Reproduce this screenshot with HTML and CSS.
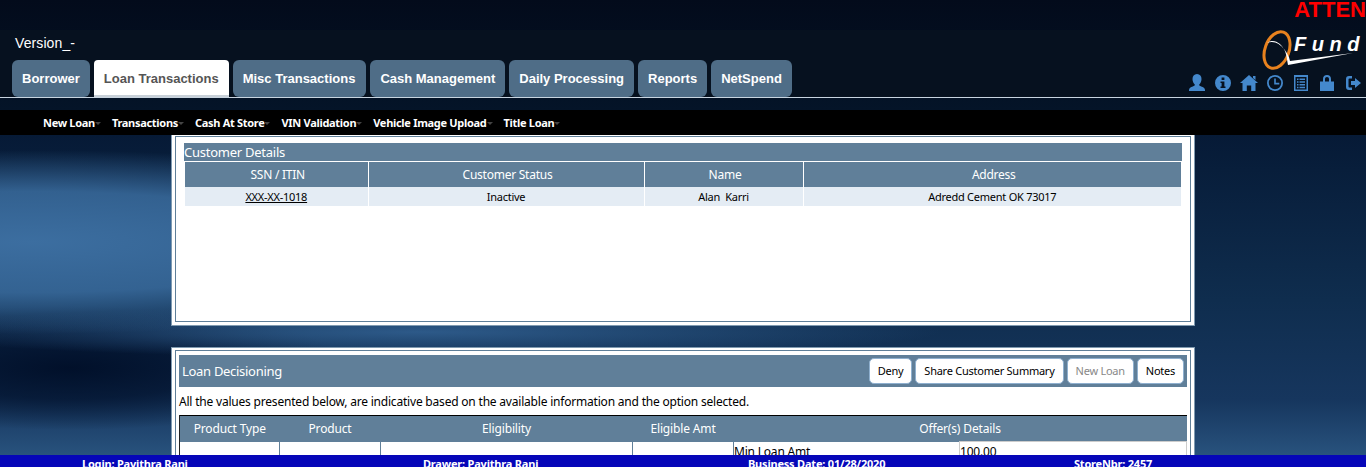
FILE: index.html
```html
<!DOCTYPE html>
<html lang="en">
<head>
    <meta charset="UTF-8">
    <title>QFund</title>
    <link rel="stylesheet" href="styles.css">
</head>
<body>
    <div class="alert">ATTEN</div>
    <header class="header">
        <div class="header-left">
            <div class="version">Version_-</div>
            <nav class="tabs">
                <a class="tab">Borrower</a>
                <a class="tab active">Loan Transactions</a>
                <a class="tab tab-misc">Misc Transactions</a>
                <a class="tab">Cash Management</a>
                <a class="tab">Daily Processing</a>
                <a class="tab">Reports</a>
                <a class="tab">NetSpend</a>
            </nav>
        </div>
        <div class="header-right">
            <div class="logo">
                <svg width="105" height="40" viewBox="0 0 105 40">
                    <ellipse cx="16" cy="20" rx="12" ry="19" transform="rotate(20 16 20)" fill="none" stroke="#e8821e" stroke-width="3"/>
                    <path d="M6 13 C13 8 20 13 24 21 C26 26 26 31 27 35 L92 23 L29 31 C28 26 26 23 23 19 C19 14 13 10 6 13z" fill="#fff"/>
                </svg>
                <span class="logo-text">Fund</span>
            </div>
            <div class="icons">
                <svg width="18" height="18" viewBox="0 0 18 18"><path d="M9 0c3 0 4.500 2.200 4.500 5 0 2.500-1 4.500-2.300 5.500 0 1 .5 1.500 2 2 2 .7 3.800 1.500 3.800 3.500v1H1v-1c0-2 1.800-2.800 3.800-3.500 1.500-.5 2-1 2-2C5.500 9.500 4.500 7.500 4.500 5 4.500 2.200 6 0 9 0z"/></svg>
                <svg width="18" height="18" viewBox="0 0 18 18"><path fill-rule="evenodd" d="M9 1a8 8 0 1 1 0 16A8 8 0 0 1 9 1zM7.600 3.500v2.500h2.800V3.500zM6.500 7.500v1.600h1.100v3.400H6.500v1.600h5v-1.600h-1.100v-5z"/></svg>
                <svg width="18" height="18" viewBox="0 0 18 18"><path d="M9 1l9 8h-2.500v8h-4.300v-5.500H6.800V17H2.500V9H0zM13 2h2.500v4L13 4z"/></svg>
                <svg width="18" height="18" viewBox="0 0 18 18"><path fill-rule="evenodd" d="M9 1a8 8 0 1 1 0 16A8 8 0 0 1 9 1zM9 2.800a6.200 6.200 0 1 0 0 12.400A6.200 6.200 0 0 0 9 2.800zM8.200 4.500h1.600v4.300h3.500v1.600H8.200z"/></svg>
                <svg width="18" height="18" viewBox="0 0 18 18"><path fill-rule="evenodd" d="M2 1h14v16H2zM3.500 3v12.500h11V3zM5 4.500h1.500V6H5zM7.500 4.500H13V6H7.500zM5 7.300h1.500v1.500H5zM7.500 7.300H13v1.500H7.500zM5 10h1.500v1.500H5zM7.500 10H13v1.500H7.500zM5 12.700h1.500v1.500H5zM7.500 12.700H13v1.500H7.500z"/></svg>
                <svg width="18" height="18" viewBox="0 0 18 18"><path fill-rule="evenodd" d="M9 1c2.500 0 4 1.600 4 4v2.500h3V17H2V7.500h3V5c0-2.400 1.500-4 4-4zM7 5v2.500h4V5c0-1.200-.8-2-2-2s-2 .8-2 2z"/></svg>
                <svg width="18" height="18" viewBox="0 0 18 18"><path d="M8 2H5a3 3 0 0 0-3 3v8a3 3 0 0 0 3 3h3v-2.500H5.500a1 1 0 0 1-1-1v-7a1 1 0 0 1 1-1H8zM11 4v3H7v4h4v3l6-5z"/></svg>
            </div>
        </div>
    </header>
    <div class="submenu">
        <a class="sub-item">New Loan</a>
        <a class="sub-item">Transactions</a>
        <a class="sub-item">Cash At Store</a>
        <a class="sub-item">VIN Validation</a>
        <a class="sub-item">Vehicle Image Upload</a>
        <a class="sub-item">Title Loan</a>
    </div>

    <main class="content">
        <section class="panel panel-customer">
            <div class="panel-inner">
                <div class="caption">Customer Details</div>
                <table class="grid">
                    <colgroup>
                        <col class="c-ssn"><col class="c-status"><col class="c-name"><col>
                    </colgroup>
                    <tr><th>SSN / ITIN</th><th>Customer Status</th><th>Name</th><th>Address</th></tr>
                    <tr><td><u>XXX-XX-1018</u></td><td>Inactive</td><td>Alan &nbsp;Karri</td><td>Adredd Cement OK 73017</td></tr>
                </table>
            </div>
        </section>

        <section class="panel panel-loan">
            <div class="panel-inner">
                <div class="loan-bar">
                    <span class="loan-title">Loan Decisioning</span>
                    <div class="actions">
                        <button class="btn">Deny</button>
                        <button class="btn">Share Customer Summary</button>
                        <button class="btn" disabled>New Loan</button>
                        <button class="btn">Notes</button>
                    </div>
                </div>
                <p class="note">All the values presented below, are indicative based on the available information and the option selected.</p>
                <table class="offers">
                    <colgroup>
                        <col class="o-type"><col class="o-product"><col class="o-elig"><col class="o-amt"><col class="o-label"><col>
                    </colgroup>
                    <tr><th>Product Type</th><th>Product</th><th>Eligibility</th><th>Eligible Amt</th><th colspan="2">Offer(s) Details</th></tr>
                    <tr><td></td><td></td><td></td><td></td><td>Min Loan Amt</td><td class="boxed">100.00</td></tr>
                </table>
            </div>
        </section>
    </main>

    <footer class="footer">
        <span class="f-login">Login: Pavithra Rani</span>
        <span class="f-drawer">Drawer: Pavithra Rani</span>
        <span class="f-date">Business Date: 01/28/2020</span>
        <span>StoreNbr: 2457</span>
    </footer>
</body>
</html>
```

FILE: styles.css
```css
html, body {
    margin: 0;
    height: 467px;
    overflow: hidden;
}
body {
    position: relative;
    font-family: "Noto Sans", Tahoma, sans-serif;
    font-size: 11px;
    letter-spacing: -0.25px;
    color: #000;
    background-color: #0f2a4c;
    background-image:
        radial-gradient(ellipse 540px 92px at 30px 242px, rgba(60,110,160,1) 0, rgba(58,108,158,0.85) 55%, rgba(58,108,158,0) 100%),
        radial-gradient(ellipse 520px 26px at 420px 332px, rgba(52,100,150,0.8), rgba(52,100,150,0) 100%),
        radial-gradient(ellipse 280px 62px at 70px 368px, #01102a 0, rgba(1,16,42,0.7) 50%, rgba(1,16,42,0) 100%),
        linear-gradient(to bottom, #030b1b 0, #041428 110px, #061a36 135px, #0f2d4e 300px, #16365e 400px, #2a5580 460px);
}
.alert {
    height: 30px;
    text-align: right;
    color: #f00;
    font: bold 22px/20px "Liberation Sans", Arial, sans-serif;
    letter-spacing: 0;
    white-space: nowrap;
}
.header {
    height: 67px;
    background: #06111f;
    border-bottom: 1px solid #c8d4e0;
    display: flex;
    justify-content: space-between;
    letter-spacing: 0;
}
.header-left, .header-right {
    display: flex;
    flex-direction: column;
    justify-content: space-between;
}
.version {
    padding: 5px 0 0 15px;
    color: #fff;
    font: 14px/16px "Liberation Sans", Arial, sans-serif;
    letter-spacing: 0.1px;
}
.tabs {
    display: flex;
    gap: 4px;
    padding-left: 12px;
}
.tab {
    height: 37px;
    padding: 0 10px;
    display: flex;
    align-items: center;
    box-sizing: border-box;
    border-radius: 6px;
    background: #4f6d87;
    color: #fff;
    font: bold 13px "Liberation Sans", Arial, sans-serif;
}
.tab-misc {
    padding-right: 11px;
}
.tab.active {
    background: #fff;
    color: #555;
    border-radius: 4px 4px 0 0;
    padding-top: 2px;
    border-bottom: 2px solid #c8d0d8;
}
.logo {
    position: relative;
    align-self: flex-end;
    width: 105px;
    height: 40px;
}
.logo-text {
    position: absolute;
    left: 33px;
    top: 3px;
    color: #fff;
    font: italic bold 20px/23px "Liberation Sans", Arial, sans-serif;
    letter-spacing: 5.5px;
}
.icons {
    display: flex;
    gap: 8px;
    justify-content: flex-end;
    padding: 0 4px 5px 0;
}
.icons svg {
    fill: #4488cc;
}
.submenu {
    margin-top: 12px;
    height: 25px;
    background: #000;
    display: flex;
    align-items: center;
    gap: 17px;
    padding-left: 43px;
    font-weight: bold;
    letter-spacing: -0.3px;
    color: #fff;
}
.sub-item {
    position: relative;
}
.sub-item::after {
    content: "";
    position: absolute;
    right: -6px;
    top: 7px;
    border: 3px solid transparent;
    border-top: 3px solid #444;
}
.content {
    height: 320px;
    overflow: hidden;
    width: 1024px;
    margin-left: 171px;
    display: flex;
    flex-direction: column;
    gap: 21px;
}
.panel {
    flex: none;
    background: #fff;
    border: 1px solid #7f9ab0;
    padding: 2px 3px 3px;
    box-sizing: border-box;
}
.panel-inner {
    border: 1px solid #5f7f99;
    height: 100%;
    box-sizing: border-box;
}
.panel-customer {
    height: 191px;
    border-top: 0;
    padding-top: 1px;
}
.panel-customer .panel-inner {
    padding: 6px 8px;
}
.caption {
    background: #607f99;
    color: #fff;
    font-size: 13px;
    line-height: 18px;
    height: 18px;
}
.grid {
    width: 996px;
    border-collapse: collapse;
    table-layout: fixed;
    margin-left: 1px;
}
.grid th {
    height: 25px;
    padding: 0 0 0 3px;
    background: #607f99;
    color: #fff;
    font-size: 12px;
    font-weight: normal;
    border-top: 1px solid #fff;
    border-right: 1px solid #fff;
}
.grid td {
    height: 19px;
    padding: 0;
    background: #e4ecf4;
    text-align: center;
    border-right: 1px solid #fff;
}
.c-ssn { width: 183px; }
.c-status { width: 276px; }
.c-name { width: 159px; }
.panel-loan {
    height: 200px;
}
.panel-loan .panel-inner {
    padding: 4px 3px 0 3px;
}
.loan-bar {
    background: #607f99;
    height: 32px;
    display: flex;
    justify-content: space-between;
    align-items: center;
    padding: 0 3px;
}
.loan-title {
    color: #fff;
    font-size: 13px;
    letter-spacing: -0.3px;
}
.actions {
    display: flex;
    gap: 3px;
}
.btn {
    height: 26px;
    min-width: 43px;
    padding: 0 8px 2px;
    background: #fff;
    border: 1px solid #8fb0cf;
    border-radius: 5px;
    font: 11px "Noto Sans", Tahoma, sans-serif;
    letter-spacing: -0.25px;
    color: #000;
}
.btn:disabled {
    color: #888;
}
.note {
    margin: 0;
    height: 28px;
    line-height: 30px;
    font-size: 12px;
    letter-spacing: -0.2px;
}
.offers {
    width: 100%;
    border-collapse: collapse;
    table-layout: fixed;
    border-top: 1px solid #000;
}
.offers th {
    height: 25px;
    padding: 0;
    background: #607f99;
    color: #fff;
    font-size: 12px;
    font-weight: normal;
    letter-spacing: -0.15px;
}
.offers th:first-child {
    border-left: 1px solid #222;
}
.offers td {
    height: 30px;
    padding: 0;
    vertical-align: top;
    border-left: 1px solid #607f99;
    font-size: 12px;
    line-height: 20px;
    letter-spacing: -0.2px;
}
.offers td:first-child {
    border-left-color: #222;
}
.o-type { width: 100px; }
.o-product { width: 101px; }
.o-elig { width: 252px; }
.o-amt { width: 101px; }
.o-label { width: 226px; }
.offers td.boxed {
    border: 1px solid #ccc;
}
.grid th:last-child, .grid td:last-child {
    border-right: 0;
}
.footer {
    position: absolute;
    left: 0;
    right: 0;
    bottom: 0;
    height: 12px;
    display: flex;
    padding-left: 82px;
    background: #0606b8;
    color: #fff;
    font-weight: bold;
    line-height: 17px;
    letter-spacing: -0.2px;
    overflow: hidden;
}
.f-login { width: 341px; }
.f-drawer { width: 325px; }
.f-date { width: 326px; }
```
